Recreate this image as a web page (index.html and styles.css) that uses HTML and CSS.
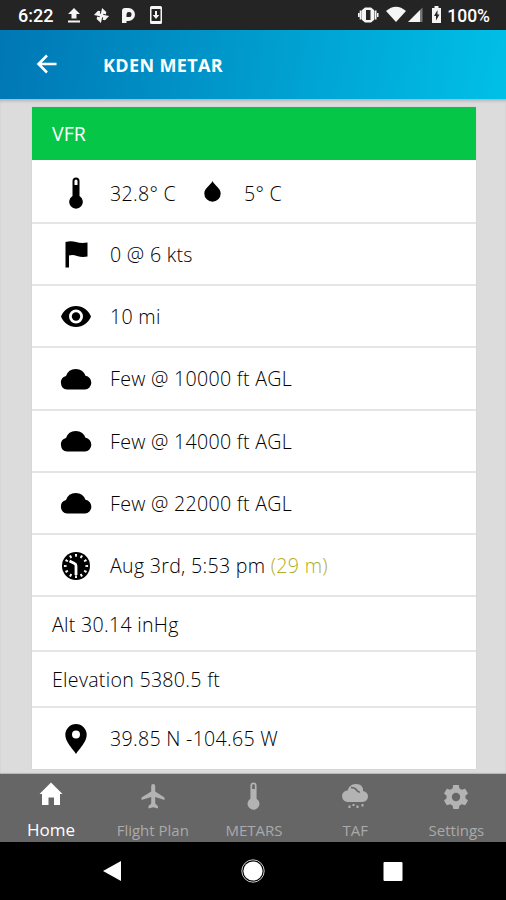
FILE: index.html
```html
<!DOCTYPE html>
<html lang="en">
<head>
<meta charset="utf-8">
<title>KDEN METAR</title>
<link rel="stylesheet" href="styles.css">
</head>
<body>
<svg class="defs" aria-hidden="true">
  <symbol id="cloud" viewBox="0 0 32 22"><path d="M7 21.500A6.900 6.900 0 0 1 6 8A10.300 10.300 0 0 1 25.500 7.800A6.900 6.900 0 0 1 25 21.500Z"/></symbol>
  <symbol id="thermo" viewBox="0 0 14 32"><path fill-rule="evenodd" d="M3.500 4a3.500 3.500 0 0 1 7 0v15a6.800 6.800 0 1 1-7 0ZM5.500 4v4h3V4a1.500 1.500 0 0 0-3 0Z"/></symbol>
</svg>
<div class="screen">
  <div class="status">
    <span class="time">6:22</span>
    <svg class="left-icons" viewBox="0 0 100 20">
      <path d="M6 3l6 6H8.500v4.500h-5V9H0ZM0 15.500h12v2H0Z"/>
      <g transform="translate(33.500 10.500) rotate(12)"><path d="M-1 0V-7.500L4-4.500V-2H1.500V0Z"/><path d="M-1 0V-7.500L4-4.500V-2H1.500V0Z" transform="rotate(90)"/><path d="M-1 0V-7.500L4-4.500V-2H1.500V0Z" transform="rotate(180)"/><path d="M-1 0V-7.500L4-4.500V-2H1.500V0Z" transform="rotate(270)"/></g>
      <path fill-rule="evenodd" d="M54 18V6Q54 3 57 3H60.500a6.500 6.500 0 0 1 0 13H58.500v2ZM58.500 12h2a2.500 2.500 0 1 0-2-2.500Z"/>
      <path fill-rule="evenodd" d="M83.500 1h9a1.500 1.500 0 0 1 1.500 1.500v15a1.500 1.500 0 0 1-1.500 1.500h-9a1.500 1.500 0 0 1-1.500-1.500v-15A1.500 1.500 0 0 1 83.500 1ZM83.500 4v12h9V4Z"/>
      <path d="M87 6h2v4h2.300L88 14 84.700 10h2.300Z"/>
    </svg>
    <svg class="right-icons" viewBox="0 0 86 20">
      <path fill-rule="evenodd" d="M7 2.500h6l3 2.500v10l-3 2.500H7L4 15V5ZM8 5v10h4.500V5Z"/><path d="M1.700 5.500h2v9h-2ZM0 8h1.500v4H0ZM16.500 5.500h2v9h-2ZM19 8h1.500v4H19Z"/>
      <path d="M28 6Q38-2.500 48 6L38 17Z"/>
      <path d="M62 5v12H50Z"/><path class="dim" d="M62 5l2.500-2.500V17H62Z"/>
      <path fill-rule="evenodd" d="M74 3h2.500V1h4v2H83v15h-9ZM79.500 5L76 11h2v4.500l3.500-6h-2Z"/>
    </svg>
    <span class="percent">100%</span>
  </div>
  <header>
    <svg class="back" viewBox="0 0 22 20"><path d="M20.500 10H2.500M11 1.500L2.500 10l8.500 8.500"/></svg>
    <h1>KDEN METAR</h1>
  </header>
  <main>
    <section class="card">
      <div class="row vfr">VFR</div>
      <div class="row icon-row first"><svg class="i thermo"><use href="#thermo"/></svg><span class="temp">32.8° C</span><svg class="drop" viewBox="0 0 17 21"><path d="M8.500 0C10 4 16.700 7 16.700 12.500A8.200 8.200 0 0 1 .3 12.500C.3 7 7 4 8.500 0Z"/></svg><span>5° C</span></div>
      <div class="row icon-row"><svg class="i flag" viewBox="0 0 23 27"><path d="M.5 1Q6-.5 11 1 16 2.500 22.500 1.500V15.500Q17 16.500 12 15 8 13.500 4 14.500V26.500H.5Z"/></svg><span>0 @ 6 kts</span></div>
      <div class="row icon-row"><svg class="i eye" viewBox="0 0 30 21"><path fill-rule="evenodd" d="M15 0C22 0 27.500 4.500 30 10.500 27.500 16.500 22 21 15 21S2.500 16.500 0 10.500C2.500 4.500 8 0 15 0ZM15 3.500a7 7 0 1 0 0 14 7 7 0 0 0 0-14Z"/><circle cx="15" cy="10.500" r="4.200"/></svg><span>10 mi</span></div>
      <div class="row icon-row"><svg class="i cloud"><use href="#cloud"/></svg><span>Few @ 10000 ft AGL</span></div>
      <div class="row icon-row"><svg class="i cloud"><use href="#cloud"/></svg><span>Few @ 14000 ft AGL</span></div>
      <div class="row icon-row"><svg class="i cloud"><use href="#cloud"/></svg><span>Few @ 22000 ft AGL</span></div>
      <div class="row icon-row"><svg class="i clock" viewBox="-14 -14 28 28"><circle r="14"/><circle class="ticks" r="10.700" pathLength="120"/><path class="hands" d="M-6.500-5L-1.500-2.500Q0-2 0 0V9"/></svg><span>Aug 3rd, 5:53 pm <em>(29 m)</em></span></div>
      <div class="row short">Alt 30.14 inHg</div>
      <div class="row short">Elevation 5380.5 ft</div>
      <div class="row icon-row last"><svg class="i pin" viewBox="0 0 22 30"><path fill-rule="evenodd" d="M11 0A10.700 10.700 0 0 1 21.700 10.700C21.700 18 14 25 11 30 8 25 .3 18 .3 10.700A10.700 10.700 0 0 1 11 0ZM11 6.500a4 4 0 1 0 0 8 4 4 0 0 0 0-8Z"/></svg><span>39.85 N -104.65 W</span></div>
    </section>
  </main>
  <nav class="tabs">
    <div class="tab active"><svg viewBox="0 0 28 28"><path d="M14 2.500L25.500 14H23v11h-6v-7.500h-5.500V25H5V14H2.500Z"/></svg><span>Home</span></div>
    <div class="tab"><svg viewBox="0 0 28 28"><path d="M25.500 18v-2.500L16.200 9.500V4a2 2 0 0 0-4 0v5.500L2.500 15.500V18l9.700-3v6.500L9.500 24v2.500l4.700-1.300 4.700 1.300V24l-2.700-2.500V15Z"/></svg><span>Flight Plan</span></div>
    <div class="tab"><svg class="mini"><use href="#thermo"/></svg><span>METARS</span></div>
    <div class="tab"><svg viewBox="0 0 28 28"><path d="M6.500 20A5.800 5.800 0 0 1 3.500 9.500Q5 8.500 6.500 8.500 7.500 4.500 11 2.800 15 1 19 2.800 22.500 5 22 9 27 10 27 14.500 26.500 19.500 21.500 20Z"/><path class="cut" d="M10 5.500Q14 5.500 15.500 8T19 10"/><path class="rain" d="M8.500 23.500v2.500M12.500 22v2M16.500 23.500v2.500M21.500 22v2.500"/></svg><span>TAF</span></div>
    <div class="tab"><svg viewBox="-14 -15 28 28"><path fill-rule="evenodd" d="M-2.700-12H2.700L3.500-8.600 5.800-7.300 9.200-8.300 12-3.600 9.400-1.300V1.300L12 3.600 9.200 8.300 5.800 7.300 3.500 8.600 2.700 12H-2.700L-3.500 8.600-5.800 7.300-9.200 8.300-12 3.600-9.400 1.300V-1.300L-12-3.600-9.200-8.300-5.800-7.300-3.500-8.600ZM0-4.200A4.200 4.200 0 1 0 0 4.200 4.200 4.200 0 0 0 0-4.200Z"/></svg><span>Settings</span></div>
  </nav>
  <div class="system">
    <svg viewBox="0 0 26 26"><path d="M3 13L21 3v20Z"/></svg>
    <svg viewBox="0 0 26 26"><circle cx="13" cy="13" r="9.600"/><circle class="ring" cx="13" cy="13" r="11.200"/></svg>
    <svg viewBox="0 0 26 26"><rect x="3.500" y="4" width="19" height="19" rx="1"/></svg>
  </div>
</div>
</body>
</html>
```

FILE: styles.css
```css
* { box-sizing: border-box; }
body { margin: 0; font-family: "Open Sans", sans-serif; color: #000; }
svg { display: block; flex: none; }
.defs { display: none; }
.screen { width: 506px; height: 900px; display: flex; flex-direction: column; overflow: hidden; }

.status { height: 30px; background: #242424; color: #fff; fill: #f5f5f5; display: flex; align-items: center; padding: 1px 16px 0 18px; font: 500 18px Roboto, sans-serif; }
.time { width: 50px; }
.left-icons { width: 100px; height: 20px; margin-top: -1px; }
.right-icons { width: 86px; height: 20px; margin: -1px 3px 0 auto; }
.percent { font-size: 17.500px; }
.dim { fill: #777; }

header { height: 69px; display: flex; align-items: center; padding: 1px 36px 0; color: #fff; background: linear-gradient(100deg, #0077b5 0%, #00c0e7 100%); }
.back { width: 22px; height: 20px; margin-top: -2px; fill: none; stroke: #fff; stroke-width: 2.500px; }
h1 { margin: 0 0 0 45px; font-size: 18px; line-height: 24px; font-weight: 700; letter-spacing: .35px; }

main { height: 675px; padding: 8px 30px 0 32px; background: #dcdcdc; box-shadow: inset 0 4px 3px -2px #b5b0b5, inset 0 -1px 1px #b5b5b5; }
.card { height: 662px; background: #fff; box-shadow: 0 0 1px #bbb; font-size: 19.600px; font-weight: 330; letter-spacing: .29px; }
.row { height: 62.200px; display: flex; align-items: center; border-bottom: 2px solid #e5e5e5; padding: 1px 20px 0; white-space: pre; }
.row.vfr { height: 53px; background: #05c646; color: #fff; font-size: 19.500px; font-weight: 400; letter-spacing: 0; border: 0; padding-top: 0; }
.row.first { height: 64px; padding-top: 5px; }
.row.short { height: 55.200px; padding-top: 2px; }
.row.last { height: 61px; border: 0; padding-top: 1px; }
.row.icon-row { padding-left: 28px; }
.i { fill: #000; }
.icon-row .cloud { width: 32px; height: 22px; margin-right: 18px; }
.icon-row .thermo { width: 14px; height: 32px; margin: -2px 27px 0 9px; }
.icon-row .flag { width: 23px; height: 27px; margin: 0 22px 0 5px; }
.icon-row .eye { width: 30px; height: 21px; margin: 0 19px 0 1px; }
.icon-row .clock { width: 28px; height: 28px; margin: 0 20px 0 2px; }
.icon-row .pin { width: 22px; height: 30px; margin: 0 23px 0 5px; }
.temp { width: 93px; }
.drop { width: 17px; height: 21px; margin: -4px 23px 0 1px; }
.ticks { fill: none; stroke: #fff; stroke-width: 2.800px; stroke-dasharray: 3.500 6.500; stroke-dashoffset: 1.750; }
.hands { fill: none; stroke: #fff; stroke-width: 2.800px; }
em { font-style: normal; color: #b2ad25; }

.tabs { height: 68px; display: grid; grid-template-columns: repeat(5, 1fr); padding-left: 1px; margin-right: -1px; background: #666; color: #aaa; fill: #b3b3b3; font-size: 15px; }
.tab { display: flex; flex-direction: column; align-items: center; padding-top: 8px; }
.tab svg { width: 28px; height: 28px; }
.tab .mini { width: 13px; height: 28px; }
.tab span { margin-top: 9px; line-height: 22px; }
.active { color: #fff; fill: #fff; font-size: 17px; margin-left: -1px; }
.active svg { margin-top: -2px; margin-bottom: 2px; }
.cut { fill: none; stroke: #666; stroke-width: 1.500px; }
.rain { stroke: #b3b3b3; stroke-width: 2px; }

.system { height: 58px; background: #000; fill: #fff; display: flex; justify-content: space-between; padding: 16px 100px; }
.system svg { width: 26px; height: 26px; }
.ring { fill: none; stroke: #ccc; stroke-width: 1px; }
```
